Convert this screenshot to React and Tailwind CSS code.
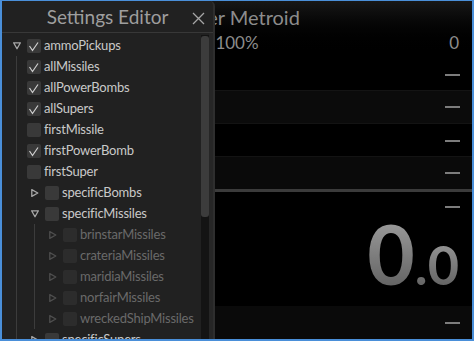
import React from "react";

const FONT = { fontFamily: "Lato, 'Noto Sans', sans-serif" };

function Check() {
  return (
    <svg width="14" height="14" viewBox="0 0 14 14">
      <polyline points="2.5,7 5.5,11.5 11,3.5" fill="none" stroke="#d0d0d0" strokeWidth="1.2" />
    </svg>
  );
}

function Tri({ dir, disabled }) {
  const c = disabled ? "#4e4e4e" : "#a8a8a8";
  return (
    <svg width="8" height="8" viewBox="0 0 8 8" className="shrink-0">
      {dir === "down" ? (
        <polygon points="0.6,0.8 7.4,0.8 4,6.8" fill="none" stroke={c} strokeWidth="1.3" strokeLinejoin="round" />
      ) : (
        <polygon points="0.8,0.6 6.8,4 0.8,7.4" fill="none" stroke={c} strokeWidth="1.3" strokeLinejoin="round" />
      )}
    </svg>
  );
}

function Row({ pl, tri, checked, label, disabled }) {
  return (
    <div className="h-[21px] flex items-center" style={{ paddingLeft: pl }}>
      {tri && (
        <div className="w-[14px] flex items-center">
          <Tri dir={tri} disabled={disabled} />
        </div>
      )}
      <div
        className={
          "w-[14px] h-[14px] rounded-[2px] flex items-center justify-center shrink-0 " +
          (disabled ? "bg-[#2c2c2c]" : "bg-[#393939]")
        }
      >
        {checked && <Check />}
      </div>
      <span
        className={
          "ml-[3px] text-[13px] leading-none whitespace-nowrap tracking-[-0.2px] " +
          (disabled ? "text-[#6a6a6a]" : "text-[#c9c9c9]")
        }
      >
        {label}
      </span>
    </div>
  );
}

function Dash() {
  return <div className="w-[15px] h-[2px] bg-[#7c7c7c]" />;
}

export default function App() {
  return (
    <div
      className="relative w-[474px] h-[341px] overflow-hidden bg-black border-[#4a8fd9] border-l-2 border-r-2 border-b-2 border-t"
      style={FONT}
    >
      {/* background app */}
      <div className="flex flex-col w-full">
        <div className="bg-linear-to-b from-[#171717] to-black">
          <div className="h-[32px] flex items-center justify-center text-[20px] text-[#8c8c8c]">
            Super Metroid
          </div>
          <div className="h-[24px] grid grid-cols-[1fr_auto_1fr] items-center pb-[6px] text-[17px] leading-none text-[#8c8c8c]">
            <span />
            <span>100%</span>
            <span className="justify-self-end pr-[13px]">0</span>
          </div>
        </div>
        <div className="h-[33px] flex items-center justify-end pr-[12px] pt-[2px]">
          <Dash />
        </div>
        <div className="h-[33px] flex items-center justify-end pr-[12px] bg-[#0b0b0b] border-t border-[#141414]">
          <Dash />
        </div>
        <div className="h-[33px] flex items-center justify-end pr-[12px] pt-[2px] border-t border-[#131313]">
          <Dash />
        </div>
        <div className="h-[33px] flex items-center justify-end pr-[12px] bg-[#0a0a0a] border-t border-[#131313]">
          <Dash />
        </div>
        <div className="h-[3px] bg-[#3b3b3b]" />
        <div className="h-[114px] flex flex-col items-end pr-[12px] pt-[14px]">
          <Dash />
          <div className="flex items-baseline mt-[4px] pr-[1px] font-bold leading-none">
            <span className="text-[82px] bg-linear-to-b from-[#a2a2a2] to-[#5e5e5e] bg-clip-text text-transparent">
              0
            </span>
            <span className="text-[54px] bg-linear-to-b from-[#9a9a9a] to-[#5e5e5e] bg-clip-text text-transparent">
              .0
            </span>
          </div>
        </div>
        <div className="h-[33px] flex items-center justify-end pr-[12px] bg-[#0a0a0a]">
          <Dash />
        </div>
      </div>

      {/* settings editor panel (overlay) */}
      <div className="absolute left-0 top-0 bottom-0 w-[213px] flex flex-col bg-[#212121] rounded-tr-[5px] border-r-2 border-[#2e2e2e]">
        <div className="h-[32px] shrink-0 relative flex items-center justify-center border-b border-[#383838]">
          <span className="text-[19px] text-[#9e9e9e] leading-none">Settings Editor</span>
          <svg width="13" height="13" viewBox="0 0 13 13" className="absolute right-[8px] top-[11px]">
            <path d="M1 1 L12 12 M12 1 L1 12" stroke="#a6a6a6" strokeWidth="1.3" />
          </svg>
        </div>
        <div className="relative flex-1 overflow-hidden">
          <div className="pt-[2px]">
            <Row pl={11} tri="down" checked label="ammoPickups" />
            <div className="ml-[14px] border-l border-[#3c3c3c]">
              <Row pl={10} checked label="allMissiles" />
              <Row pl={10} checked label="allPowerBombs" />
              <Row pl={10} checked label="allSupers" />
              <Row pl={10} label="firstMissile" />
              <Row pl={10} checked label="firstPowerBomb" />
              <Row pl={10} label="firstSuper" />
              <Row pl={14} tri="right" label="specificBombs" />
              <Row pl={14} tri="down" label="specificMissiles" />
              <div className="ml-[17px] border-l border-[#3c3c3c]">
                <Row pl={14} tri="right" disabled label="brinstarMissiles" />
                <Row pl={14} tri="right" disabled label="crateriaMissiles" />
                <Row pl={14} tri="right" disabled label="maridiaMissiles" />
                <Row pl={14} tri="right" disabled label="norfairMissiles" />
                <Row pl={14} tri="right" disabled label="wreckedShipMissiles" />
              </div>
              <Row pl={14} tri="right" label="specificSupers" />
            </div>
          </div>
          {/* scrollbar */}
          <div className="absolute left-[199px] top-[2px] bottom-0 w-[8px] bg-[#141414]">
            <div className="mt-[1px] h-[181px] rounded-[3px] bg-[#3c3c3c]" />
          </div>
          <div className="absolute left-[207px] top-0 bottom-0 w-[4px] bg-[#262626]" />
        </div>
      </div>
    </div>
  );
}
